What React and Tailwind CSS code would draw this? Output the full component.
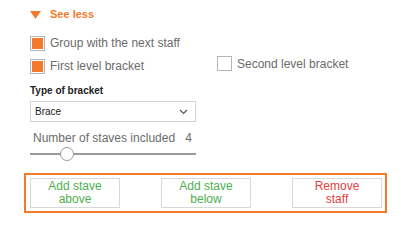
import { useState } from 'react';

const ORANGE = 'bg-[#f47a2b]';

function Checkbox({ checked, label, onChange, className = '' }) {
  return (
    <label className={`flex cursor-pointer items-center gap-[5px] ${className}`}>
      <span className="flex h-[15px] w-[15px] items-center justify-center border border-[#b5b5b5] bg-white">
        {checked && <span className={`h-[11px] w-[11px] ${ORANGE}`} />}
      </span>
      <input type="checkbox" className="hidden" checked={checked} onChange={onChange} />
      <span className="text-[12px] leading-[14px] text-[#6b6b6b]">{label}</span>
    </label>
  );
}

function ActionButton({ children, tone }) {
  return (
    <button
      type="button"
      className={`flex h-[30px] w-[90px] items-center justify-center border border-[#d8d8d8] bg-white text-center text-[12px] leading-[13px] ${
        tone === 'red' ? 'text-[#e8413d]' : 'text-[#4caf50]'
      }`}
    >
      {children}
    </button>
  );
}

export default function App() {
  const [group, setGroup] = useState(true);
  const [first, setFirst] = useState(true);
  const [second, setSecond] = useState(false);
  const [staves, setStaves] = useState(4);

  return (
    <div className="h-[226px] w-[409px] overflow-hidden bg-white pl-[30px] font-['Liberation_Sans',Arial,sans-serif]">
      <button type="button" className="flex h-[28px] items-center gap-[9px] pt-[1px]">
        <svg width="11" height="8" viewBox="0 0 11 8">
          <path d="M0 0H11L5.5 8Z" fill="#f47a2b" />
        </svg>
        <span className="text-[11px] font-bold text-[#f47a2b]">See less</span>
      </button>

      <Checkbox
        className="mt-[7px] h-[16px]"
        checked={group}
        onChange={() => setGroup(!group)}
        label="Group with the next staff"
      />

      <div className="mt-[7px] flex h-[16px]">
        <Checkbox
          className="w-[187px]"
          checked={first}
          onChange={() => setFirst(!first)}
          label="First level bracket"
        />
        <Checkbox
          className="mt-[-5px]"
          checked={second}
          onChange={() => setSecond(!second)}
          label="Second level bracket"
        />
      </div>

      <p className="mt-[11px] h-[12px] text-[10px] font-bold leading-[12px] text-[#222]">
        Type of bracket
      </p>

      <div className="mt-[4px] flex h-[21px] w-[166px] items-center justify-between border border-[#d4d4d4] bg-white pl-[4px] pr-[7px]">
        <span className="text-[10px] text-[#222]">Brace</span>
        <svg width="9" height="6" viewBox="0 0 9 6">
          <path d="M1 1L4.5 4.5L8 1" fill="none" stroke="#555" strokeWidth="1.2" />
        </svg>
      </div>

      <div className="mt-[9px] flex h-[14px] w-[162px] items-center justify-between pl-[3px] text-[12px] text-[#6b6b6b]">
        <span>Number of staves included</span>
        <span>{staves}</span>
      </div>

      <div className="relative mt-[2px] h-[12px] w-[166px]">
        <div className="absolute left-0 right-0 top-[6px] h-[2px] bg-[#9a9a9a]" />
        <input
          type="range"
          min="1"
          max="16"
          value={staves}
          onChange={(e) => setStaves(Number(e.target.value))}
          className="absolute inset-0 opacity-0"
        />
        <div className="pointer-events-none absolute left-[30px] top-0 h-[14px] w-[14px] rounded-full border border-[#9a9a9a] bg-white" />
      </div>

      <div className="ml-[-6px] mt-[14px] flex h-[40px] w-[363px] items-start justify-between border-2 border-[#f47a2b] pl-[4px] pr-[3px] pt-[3px]">
        <ActionButton>
          Add stave
          <br />
          above
        </ActionButton>
        <ActionButton>
          Add stave
          <br />
          below
        </ActionButton>
        <ActionButton tone="red">
          Remove
          <br />
          staff
        </ActionButton>
      </div>
    </div>
  );
}
